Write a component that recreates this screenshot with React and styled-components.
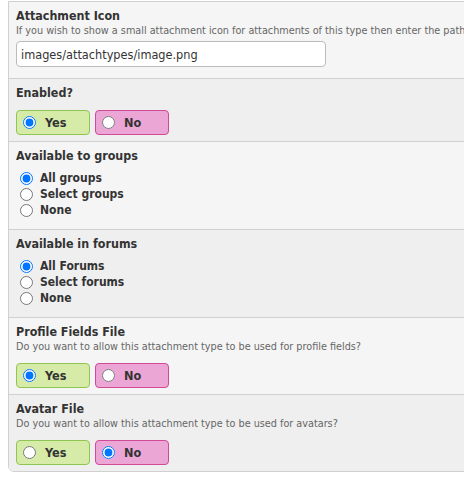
import React from 'react';
import styled, { createGlobalStyle } from 'styled-components';

const GlobalStyle = createGlobalStyle`
  html, body {
    margin: 0;
    background: #fff;
    overflow: hidden;
  }
  body {
    font-family: "DejaVu Sans Condensed", "DejaVu Sans", sans-serif;
    color: #333;
  }
`;

const Panel = styled.div`
  margin: 1px 0 0 8px;
  width: 600px;
  border: 1px solid #d0d0d0;
  border-radius: 0 0 6px 6px;
  overflow: hidden;
`;

const Row = styled.div`
  padding: 6px 7px ${(p) => p.$pb || 6}px 7px;
  background: ${(p) => (p.$alt ? '#efefef' : '#f5f5f5')};
  border-top: ${(p) => (p.$first ? 'none' : '1px solid #d0d0d0')};
`;

const Label = styled.div`
  font-size: 12.4px;
  line-height: 16px;
  font-weight: bold;
  color: #333;
`;

const Description = styled.div`
  font-size: 10.75px;
  line-height: 14px;
  color: #666;
  white-space: nowrap;
`;

const TextInput = styled.input`
  display: block;
  box-sizing: border-box;
  margin-top: 3px;
  width: 310px;
  height: 26px;
  padding: 0 4px;
  border: 1px solid #bbb;
  border-radius: 4px;
  background: #fff;
  font-family: inherit;
  font-size: 12.6px;
  color: #333;
`;

const ToggleGroup = styled.div`
  display: flex;
  gap: 5px;
  margin-top: ${(p) => p.$mt || 9}px;
`;

const Toggle = styled.label`
  display: flex;
  align-items: center;
  box-sizing: border-box;
  width: 74px;
  height: 25px;
  padding-left: 5px;
  border-radius: 4px;
  border: 1px solid ${(p) => (p.$yes ? '#8fc553' : '#d14a95')};
  background: ${(p) => (p.$yes ? '#d7eba8' : '#eca6d6')};
  font-size: 12.6px;
  font-weight: bold;
  color: #333;

  input {
    width: 13px;
    height: 13px;
    margin: 0 9px 0 1px;
  }
`;

const RadioList = styled.div`
  display: flex;
  flex-direction: column;
  margin: 6px 0 5px 4px;
`;

const RadioItem = styled.label`
  display: flex;
  align-items: center;
  height: 16px;
  font-size: 12px;
  font-weight: bold;
  color: #333;

  input {
    width: 13px;
    height: 13px;
    margin: 0 7px 0 0;
  }
`;

function YesNo({ name, value, mt }) {
  return (
    <ToggleGroup $mt={mt}>
      <Toggle $yes>
        <input type="radio" name={name} defaultChecked={value} />
        Yes
      </Toggle>
      <Toggle>
        <input type="radio" name={name} defaultChecked={!value} />
        No
      </Toggle>
    </ToggleGroup>
  );
}

function Choices({ name, options }) {
  return (
    <RadioList>
      {options.map((o, i) => (
        <RadioItem key={o}>
          <input type="radio" name={name} defaultChecked={i === 0} />
          {o}
        </RadioItem>
      ))}
    </RadioList>
  );
}

export default function App() {
  return (
    <>
      <GlobalStyle />
      <Panel>
        <Row $first $pb={11}>
          <Label>Attachment Icon</Label>
          <Description>
            If you wish to show a small attachment icon for attachments of this type then enter the path
          </Description>
          <TextInput defaultValue="images/attachtypes/image.png" />
        </Row>
        <Row $alt>
          <Label>Enabled?</Label>
          <YesNo name="enabled" value />
        </Row>
        <Row>
          <Label>Available to groups</Label>
          <Choices name="groups" options={['All groups', 'Select groups', 'None']} />
        </Row>
        <Row $alt>
          <Label>Available in forums</Label>
          <Choices name="forums" options={['All Forums', 'Select forums', 'None']} />
        </Row>
        <Row>
          <Label>Profile Fields File</Label>
          <Description>Do you want to allow this attachment type to be used for profile fields?</Description>
          <YesNo name="profile" value mt={9} />
        </Row>
        <Row $alt>
          <Label>Avatar File</Label>
          <Description>Do you want to allow this attachment type to be used for avatars?</Description>
          <YesNo name="avatar" value={false} mt={9} />
        </Row>
      </Panel>
    </>
  );
}
